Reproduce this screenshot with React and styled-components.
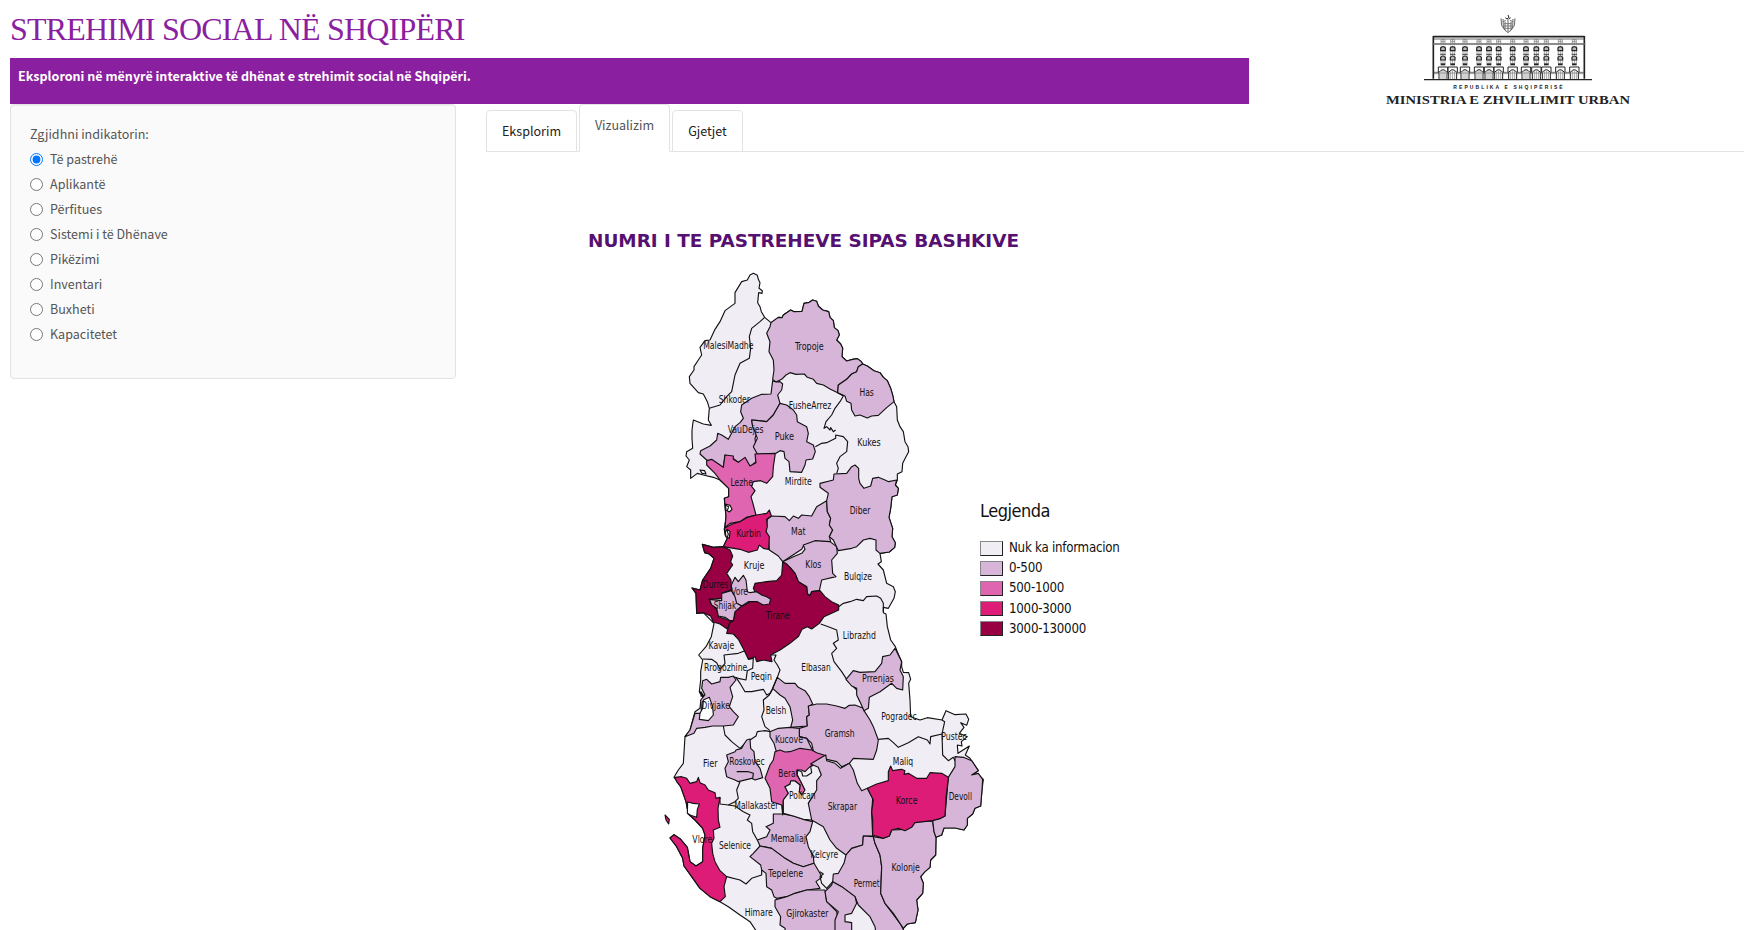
import React, { useState } from "react";
import styled, { createGlobalStyle, css } from "styled-components";

const GlobalStyle = createGlobalStyle`
  * { box-sizing: border-box; }
  body {
    margin: 0;
    background: #fff;
    color: #555;
    font-family: "Noto Sans CJK SC", "Open Sans", sans-serif;
    font-size: 12.55px;
    line-height: 20px;
  }
`;

const Page = styled.div`
  height: 930px;
  overflow: hidden;
  padding-left: 10px;
`;

const Header = styled.header`
  display: flex;
  height: 104px;
`;

const HeaderMain = styled.div`
  width: 1239px;
`;

const Title = styled.h1`
  margin: 0;
  height: 58px;
  padding-top: 10px;
  color: #8a20a0;
  font: 400 32px/38px "Liberation Serif", serif;
  letter-spacing: -0.8px;
  white-space: nowrap;
`;

const Banner = styled.div`
  height: 46px;
  padding: 8px 8px 0;
  background: #8a20a0;
  color: #fff;
  font-weight: 700;
`;

const Logo = styled.svg`
  display: block;
  margin: 5px 0 0 121px;
`;

const Body = styled.div`
  display: flex;
  align-items: flex-start;
`;

const Sidebar = styled.form`
  width: 446px;
  height: 275px;
  padding: 19px 19px 0;
  border: 1px solid #e3e3e3;
  border-radius: 4px;
  background: #fafafa;
  box-shadow: inset 0 1px 1px rgba(0, 0, 0, 0.05);
`;

const Caption = styled.div`
  height: 25px;
`;

const Option = styled.label`
  display: flex;
  align-items: center;
  height: 25px;
  gap: 7px;
  padding-bottom: 5px;

  input {
    width: 13px;
    height: 13px;
    margin: 1px 0 0;
    accent-color: #0075ff;
  }
`;

const Main = styled.main`
  flex: 1;
  margin-left: 30px;
`;

const Tabs = styled.nav`
  display: flex;
  align-items: flex-end;
  gap: 2px;
  height: 48px;
  border-bottom: 1px solid #e3e3e3;
`;

const Tab = styled.button`
  width: ${(p) => p.$width}px;
  height: 42px;
  margin: 0 0 -1px;
  padding: 0 0 1px;
  border: 1px solid #e3e3e3;
  border-radius: 4px 4px 0 0;
  background: #fff;
  color: #222;
  font: inherit;
  ${(p) =>
    p.$active &&
    css`
      height: 48px;
      padding-bottom: 7px;
      border-bottom-color: #fff;
      color: #555;
    `}
`;

const MapPanel = styled.section`
  padding: 76px 0 0 102px;
`;

const MapTitle = styled.h2`
  margin: 0;
  height: 34px;
  color: #551071;
  font: 700 18.4px/25px "DejaVu Sans", sans-serif;
  white-space: nowrap;
`;

const MapRow = styled.div`
  display: flex;
  padding-left: 72px;
`;

const MapSvg = styled.svg`
  display: block;
  overflow: visible;
  text {
    font-family: "DejaVu Sans", sans-serif;
    font-stretch: condensed;
    font-size: 29px;
    text-anchor: middle;
    fill: #111;
  }
`;

const Legend = styled.aside`
  padding-top: 236px;
  color: #111;
  font: 13.2px/20.2px "DejaVu Sans", sans-serif;
  font-stretch: condensed;
  letter-spacing: -0.25px;
`;

const LegendTitle = styled.h3`
  margin: 0 0 15px;
  font-size: 18px;
  line-height: 25px;
  font-weight: 400;
  letter-spacing: -0.5px;
`;

const LegendItem = styled.div`
  display: flex;
  align-items: center;
  gap: 6px;
  white-space: nowrap;
`;

const Swatch = styled.span`
  width: 23px;
  height: 15px;
  border: 1px solid #222;
  border-top-color: #888;
  border-left-color: #888;
  background: ${(p) => p.$color};
`;

const NONE = "#f0edf5";
const LOW = "#d7b5d8";
const MID = "#df65b0";
const HIGH = "#dd1c77";
const TOP = "#980043";

const COUNTRY =
  "250,40 262,46 265,58 270,68 267,85 277,92 276,100 266,98 263,128 270,140 274,155 284,172 303,188 325,172 336,173 340,165 350,158 362,150 372,155 396,154 402,130 418,127 428,120 440,124 445,138 458,150 476,155 480,172 490,182 493,203 504,212 508,225 500,240 512,252 518,265 516,290 530,303 548,298 562,296 574,305 578,312 592,318 612,332 630,338 640,352 652,362 662,385 668,405 672,425 680,440 682,480 690,500 700,515 705,545 714,560 716,575 708,590 698,610 696,635 682,642 682,660 676,675 685,685 682,705 666,710 662,745 657,772 668,805 666,830 676,848 674,862 658,876 630,880 634,905 624,912 640,930 650,970 670,980 676,995 672,1015 655,1045 640,1042 640,1058 648,1062 652,1100 662,1140 676,1160 682,1175 695,1205 695,1220 700,1237 716,1238 722,1258 716,1270 720,1320 722,1370 750,1380 772,1373 816,1380 828,1352 855,1364 888,1362 896,1378 890,1396 872,1388 882,1402 868,1420 892,1430 874,1445 876,1458 862,1455 864,1480 898,1458 886,1485 900,1495 910,1510 925,1532 905,1548 926,1545 940,1558 936,1590 932,1638 915,1645 908,1662 892,1675 892,1695 882,1710 855,1704 822,1704 815,1725 798,1732 797,1785 782,1800 780,1822 765,1835 752,1850 760,1870 758,1900 740,1920 744,1950 736,1988 712,1992 700,2005 700,2050 270,2050 260,2015 240,1985 210,1965 175,1940 150,1925 120,1910 90,1885 65,1850 42,1818 38,1795 20,1760 0,1734 12,1724 32,1738 52,1762 60,1805 78,1818 98,1805 98,1765 105,1725 98,1705 75,1680 55,1662 48,1625 32,1580 18,1560 12,1552 25,1530 40,1510 45,1430 60,1410 75,1355 90,1345 92,1325 100,1310 88,1295 92,1260 92,1235 98,1200 86,1185 108,1160 124,1130 132,1090 100,1058 80,1060 78,1000 66,984 90,990 98,960 122,925 132,895 118,882 104,878 97,853 130,862 160,860 172,835 163,810 168,770 163,715 176,710 176,685 150,660 130,652 100,645 82,640 62,655 62,630 50,620 58,600 48,588 50,575 68,565 66,535 66,510 70,480 100,492 124,496 115,480 118,445 112,425 100,402 85,398 60,370 58,350 72,330 72,320 85,300 95,285 90,262 105,242 120,240 135,208 150,185 165,152 195,130 195,98 215,65 232,60 240,45";

// Each sheet holds shapes that share one local origin on the map.
const SHEETS = [
  {
    at: [0, 0],
    areas: [
      [LOW, "303,188 325,172 336,173 340,165 350,158 362,150 372,155 396,154 402,130 418,127 428,120 440,124 445,138 458,150 476,155 480,172 490,182 493,203 504,212 508,225 500,240 512,252 518,265 516,290 530,303 548,298 562,296 574,305 578,312 565,320 560,335 545,342 530,358 505,375 503,398 480,387 460,375 440,370 430,358 412,352 403,342 378,343 360,338 348,345 335,358 318,366 308,358 312,330 310,300 297,275 300,245 290,220 300,200"],
      [LOW, "578,312 592,318 612,332 630,338 640,352 652,362 662,385 668,405 672,425 650,443 625,466 605,468 592,474 570,465 555,468 545,450 543,430 530,424 525,408 503,398 505,375 530,358 545,342 560,335 565,320"],
      [LOW, "308,362 318,366 330,365 338,372 335,390 323,405 330,430 320,447 310,465 290,485 265,482 245,480 248,500 262,515 255,535 258,560 262,582 258,605 240,620 225,595 205,607 190,595 165,585 160,623 110,600 90,582 92,572 120,558 140,540 143,520 155,525 175,538 195,500 210,488 220,475 212,455 215,435 245,415 275,403 303,402"],
      [LOW, "330,430 350,435 370,450 380,465 382,485 410,500 415,520 410,545 430,555 436,575 428,597 408,600 405,615 395,637 360,635 357,605 345,595 342,575 330,572 318,580 262,582 250,560 262,535 255,515 248,500 245,480 265,482 290,485 310,465"],
    ],
    lines: [
      "284,172 270,185 245,205 238,230 242,265 238,295 210,310 195,345 190,370 185,395 170,410 150,435 118,445",
      "503,398 520,408 510,425 495,445 485,465 468,485 462,505 470,500 480,510 482,503 490,515 497,510",
      "436,560 455,550 470,548 497,535 497,525 520,530 533,545 530,575 510,590 500,610 505,625 500,640",
    ],
  },
  {
    at: [0, 510],
    areas: [
      [LOW, "304,258 345,260 358,272 370,258 385,265 395,255 425,258 440,230 470,212 472,245 482,265 478,285 488,300 478,320 482,335 435,335 400,348 395,358 338,395 325,378 298,360 296,330 288,305 292,268"],
      [LOW, "338,395 370,380 395,370 405,358 400,345 435,332 480,335 500,350 502,370 485,390 488,430 498,440 455,450 448,482 425,485 420,497 412,490 410,470 385,455 375,430 360,412"],
      [LOW, "450,160 490,150 492,132 530,130 545,110 555,105 566,115 566,145 570,160 582,175 602,168 608,145 625,142 645,150 656,155 680,150 676,165 685,175 682,195 666,200 662,235 657,262 668,295 666,320 676,338 674,352 658,366 630,370 618,360 618,330 600,325 580,330 560,350 545,355 505,362 490,330 478,320 488,300 478,285 482,265 472,245 470,212 475,190 450,172"],
      [MID, "110,92 125,88 160,112 165,75 190,78 190,88 205,97 225,82 240,108 258,98 255,72 316,70 310,110 308,140 290,160 272,152 250,155 245,170 255,182 243,200 250,225 258,255 230,262 210,275 180,280 165,292 168,260 163,205 176,200 176,175 150,150 135,130 110,105"],
      [HIGH, "163,295 185,283 210,275 232,262 260,255 290,250 298,240 304,258 290,268 292,290 288,305 298,320 296,358 280,355 268,345 262,360 235,367 210,358 160,350 172,325 165,315"],
      [TOP, "97,343 130,352 160,350 180,360 188,378 182,395 188,405 170,430 183,450 184,480 155,490 155,505 118,508 125,525 140,535 145,560 185,573 178,585 172,597 150,582 130,576 122,558 100,548 80,550 78,490 66,474 90,480 98,450 122,415 132,385 118,372 104,368"],
      [TOP, "338,397 348,400 360,412 375,430 385,455 410,470 412,492 420,497 425,485 450,482 465,500 485,515 506,525 506,540 485,550 462,560 448,580 425,597 412,590 396,598 385,620 360,640 330,660 302,675 306,695 280,690 260,695 255,680 235,688 222,660 205,628 190,612 170,610 178,580 190,572 195,545 215,528 235,520 255,485 250,475 255,460 290,455 320,452 335,435"],
      [LOW, "184,465 195,442 205,455 220,436 228,450 232,485 240,488 260,485 275,495 290,500 302,508 298,522 280,525 262,515 235,515 215,528 200,520 185,490"],
      [LOW, "118,508 155,512 155,490 184,482 195,500 200,520 215,528 195,545 190,572 180,572 165,562 145,558 140,535 125,525"],
      ["#fff", "166,222 180,226 186,238 178,246 168,240"],
      ["#fff", "172,298 180,305 178,325 168,320 166,305"],
      [NONE, "90,120 104,122 108,132 96,130"],
    ],
    lines: [
      "506,530 520,520 540,515 560,508 580,512 590,500 620,498 632,505 640,520 640,545",
      "167,226 176,230 172,242",
      "170,300 175,312 172,322",
    ],
  },
  {
    at: [0, 1020],
    areas: [
      [LOW, "98,242 110,238 125,252 150,245 152,232 175,232 190,228 198,240 180,262 188,290 178,320 190,335 205,350 190,375 160,378 128,378 105,382 80,385 72,400 45,410 60,390 75,340 95,340 92,300 105,285 95,265"],
      ["#fff", "100,300 118,292 128,320 130,345 115,362 88,358 90,340 98,325"],
      [LOW, "322,232 345,250 375,250 385,262 405,272 418,290 428,312 415,320 418,345 410,350 412,378 362,382 368,360 360,320 345,295 330,285 308,265"],
      [LOW, "415,318 440,312 470,312 500,318 525,325 538,316 555,315 580,325 582,332 600,360 610,380 625,420 620,450 610,478 550,475 538,490 515,500 500,485 470,478 445,485 430,452 425,430 410,415 388,410 388,385 412,378 410,350 418,345"],
      [LOW, "300,395 325,385 360,382 388,385 388,410 410,415 428,452 405,460 375,452 350,460 320,458 312,430 300,410"],
    ],
    lines: [
      "452,72 475,80 500,90 505,120 490,130 500,145 485,160 492,185 515,215 530,238 560,270 568,300 580,318",
      "302,165 318,165 312,180 322,195 330,210 322,232 308,265 300,280 290,285 280,268 245,275 225,275 210,250 198,232",
      "98,177 125,178 140,188 150,208 165,190 162,165 205,160 225,152",
      "235,178 250,175 248,205 232,212 228,240 205,235 190,230",
      "308,268 298,285 280,300 282,330 275,350 285,380 300,392",
      "160,378 165,405 185,425 210,445 225,430 240,420 258,408 262,395 285,392 300,395",
    ],
  },
  {
    at: [510, 1140],
    areas: [
      [LOW, "18,118 40,92 60,97 105,95 125,70 128,50 150,45 165,25 175,45 185,65 180,90 190,110 188,150 170,145 155,130 120,155 88,172 85,205 72,212 62,190 50,165 50,145 35,138"],
    ],
    lines: [
      "115,298 145,295 160,308 175,322 205,308 235,290 262,300 270,312 272,290 306,282",
      "306,240 314,245 306,282 308,345 325,362 340,352 350,372",
    ],
  },
  {
    at: [-30, 1440],
    areas: [
      [LOW, "200,45 225,35 228,30 245,25 252,12 260,0 270,-3 272,25 282,35 285,65 300,85 308,113 285,120 275,115 235,125 225,120 200,110 195,85 205,65"],
      [LOW, "340,222 370,222 400,228 430,238 458,245 450,275 438,290 445,320 460,350 462,370 430,380 400,370 375,355 355,340 335,325 300,318 292,300 320,290 330,270 318,260 340,250"],
      [LOW, "300,318 335,325 355,340 375,355 400,370 430,380 462,370 480,400 485,412 468,425 480,445 440,450 405,460 380,470 350,475 342,470 335,450 320,440 318,400 305,390 302,375 270,350 280,340"],
      [LOW, "345,480 380,470 405,460 440,450 495,450 500,485 530,515 540,570 540,620 380,620 375,565 360,555 362,530 345,500"],
      [MID, "345,35 360,30 375,36 390,35 420,25 455,30 470,38 498,47 475,65 450,80 435,95 425,90 412,90 412,105 425,130 435,150 425,165 418,155 420,135 405,123 392,123 390,133 375,140 385,160 370,180 368,225 365,195 335,185 330,145 315,115 330,75 340,60"],
      [NONE, "370,220 370,180 385,160 375,140 390,133 392,123 405,123 420,135 418,155 425,165 435,150 425,130 412,105 412,90 425,95 428,108 440,108 455,98 452,80 465,72 475,80 485,105 472,122 475,150 455,175 445,190 458,215 455,240 430,238 400,228"],
      [HIGH, "45,112 65,110 80,115 90,130 110,125 115,112 120,128 135,135 145,150 165,158 168,175 180,172 174,205 175,240 180,262 160,270 162,295 155,310 158,340 165,365 180,392 200,410 192,440 196,470 180,485 150,470 120,445 95,410 72,378 68,355 50,320 30,294 42,284 62,298 82,322 90,365 108,378 128,365 128,325 135,285 128,265 105,240 85,222 78,185 62,140 50,125"],
      ["#fff", "83,186 100,190 118,192 112,208 110,232 92,226 82,220"],
      [HIGH, "15,225 28,238 26,252 18,240"],
    ],
    lines: [
      "180,172 180,192 205,195 225,185 235,175 230,150 240,125",
      "225,198 250,215 270,225 262,240 275,250 278,275 292,300",
      "205,195 225,198",
      "230,95 265,95 280,100 278,116",
      "200,410 240,420 258,432 275,415 305,405 305,390",
    ],
  },
  {
    at: [450, 1440],
    areas: [
      [LOW, "17,45 20,62 45,70 62,85 88,70 100,90 112,130 125,152 142,145 158,175 155,220 158,288 130,288 128,315 95,325 78,345 50,325 30,300 10,260 -25,240 -35,190 -10,150 -10,122 4,105 -5,82 -28,72 -5,58"],
      [LOW, "130,288 160,290 165,310 180,345 185,380 182,460 195,490 240,550 250,568 250,600 170,600 165,560 150,530 115,495 105,470 65,440 38,425 40,402 55,400 72,370 78,345 95,325 128,315"],
      [LOW, "160,290 190,295 208,288 215,270 255,268 275,258 285,245 338,243 342,275 348,292 347,345 332,360 330,382 315,395 302,410 310,430 308,460 290,480 294,510 286,548 262,552 250,565 240,550 220,520 195,490 182,460 185,380 180,345 165,310"],
      [LOW, "405,50 430,52 455,62 475,92 455,105 475,100 488,118 486,150 482,198 465,205 458,222 442,235 442,255 432,270 405,264 372,264 365,285 348,292 342,275 338,240 362,235 375,228 385,112 405,80"],
      [HIGH, "142,145 170,132 205,122 205,95 212,78 218,92 245,88 255,92 252,103 265,100 290,115 320,115 330,98 365,100 385,112 378,175 375,228 362,235 338,242 285,248 275,262 255,272 235,265 215,270 208,288 190,295 158,285 158,240 155,215 160,180"],
      [LOW, "38,425 65,440 105,470 110,490 95,520 75,525 75,545 95,548 95,600 45,600 45,540 55,515 20,485 15,455 35,435"],
    ],
    lines: ["0,395 10,402 0,410 5,430 20,445 38,425"],
  },
];

// Name, centre x, baseline y, drawn width.
const LABELS = [
  ["MalesiMadhe", 175, 268, 151], ["Tropoje", 418, 271, 86], ["Has", 590, 407, 43],
  ["Shkoder", 193, 428, 94], ["FusheArrez", 420, 446, 128], ["VauDejes", 227, 518, 108],
  ["Puke", 343, 541, 58], ["Kukes", 597, 557, 70], ["Lezhe", 215, 678, 67],
  ["Mirdite", 385, 676, 81], ["Diber", 570, 761, 62], ["Kurbin", 236, 831, 74],
  ["Mat", 385, 824, 44], ["Kruje", 252, 927, 62], ["Klos", 430, 924, 48],
  ["Bulqize", 564, 960, 84], ["Durres", 136, 985, 77], ["Vore", 209, 1006, 50],
  ["Shijak", 165, 1046, 68], ["Tirane", 323, 1078, 72], ["Kavaje", 154, 1168, 77],
  ["Librazhd", 568, 1138, 99], ["Rrogozhine", 167, 1234, 130], ["Peqin", 274, 1259, 64],
  ["Elbasan", 438, 1234, 88], ["Prrenjas", 624, 1265, 96], ["Divjake", 137, 1348, 86],
  ["Belsh", 318, 1362, 62], ["Pogradec", 687, 1381, 106], ["Gramsh", 509, 1431, 90],
  ["Kucove", 357, 1449, 84], ["Pustec", 852, 1439, 76], ["Maliq", 699, 1514, 61],
  ["Fier", 121, 1520, 44], ["Roskovec", 231, 1514, 106], ["Berat", 355, 1551, 60],
  ["Polican", 397, 1617, 80], ["Skrapar", 517, 1650, 88], ["Korce", 710, 1633, 65],
  ["Devoll", 871, 1621, 70], ["Mallakaster", 259, 1647, 132], ["Vlore", 97, 1750, 60],
  ["Selenice", 195, 1766, 96], ["Memaliaj", 355, 1747, 106], ["Kelcyre", 463, 1794, 83],
  ["Kolonje", 707, 1833, 85], ["Tepelene", 347, 1852, 104], ["Permet", 590, 1882, 78],
  ["Himare", 266, 1968, 84], ["Gjirokaster", 412, 1972, 126],
];

function AlbaniaMap() {
  return (
    <MapSvg width="320" height="668" viewBox="-30 6 960 2004">
      <g stroke="#111" strokeWidth="3.4" strokeLinejoin="round" fill="none">
        <polygon points={COUNTRY} fill={NONE} />
        {SHEETS.map((s, i) => (
          <g key={i} transform={`translate(${s.at[0]} ${s.at[1]})`}>
            {s.areas.map(([fill, points], n) => (
              <polygon key={n} points={points} fill={fill} />
            ))}
            {s.lines.map((points, n) => (
              <polyline key={n} points={points} />
            ))}
          </g>
        ))}
        <path d="M90 1295l8 12M92 1305l10 4" strokeWidth="8" />
      </g>
      {LABELS.map(([name, x, y, w]) => (
        <text key={name} x={x} y={y} textLength={w} lengthAdjust="spacingAndGlyphs">
          {name}
        </text>
      ))}
    </MapSvg>
  );
}

const COLUMNS = [219, 248, 285, 327, 357, 386, 428, 468, 499, 529, 571, 613];

function MinistryLogo() {
  return (
    <Logo width="280" height="99" viewBox="0 0 840 297" overflow="visible">
      <g fill="none" stroke="#222" strokeWidth="3">
        <g stroke="#666" strokeWidth="3">
          <path d="M414 30l3 7-6 5M411 42l-5-4M417 42l5-4" stroke="#222" />
          <path d="M414 42v40M393 40l2 22 10 14M435 40l-2 22-10 14M399 42l1 24 8 12M429 42l-1 24-8 12M405 50v20M423 50v20" />
          <path d="M408 46l-9 4M420 46l9 4M403 56h22M401 63h26M405 70h18M406 77l8 6 8-6" strokeWidth="2.5" />
        </g>
        <path d="M190 95H643M190 93v128M643 93v128" strokeWidth="5" />
        <path d="M188 117H646" strokeWidth="5" stroke="#666" />
        <path d="M192 102H641M192 202H641" strokeWidth="2" />
        <path d="M192 206H641" stroke="#666" strokeWidth="2" />
        <path d="M162 224H666" strokeWidth="4" />
        {COLUMNS.map((x) => (
          <g key={x}>
            <path d={`M${x - 6} 117v-13h12v13M${x} 104v13M${x - 6} 110h12`} stroke="#777" strokeWidth="2" />
            <path d={`M${x - 6} 122v54M${x} 122v54M${x + 6} 122v54`} stroke="#999" strokeWidth="2.5" />
            <path d={`M${x - 7} 137v-8q7-8 14 0v8zM${x - 7} 165v-8q7-8 14 0v8z`} fill="#bbb" strokeWidth="3.5" />
            <path d={`M${x - 8} 148h16`} strokeWidth="2.5" />
            <path d={`M${x - 7} 178h14`} strokeWidth="6" />
            <path d={`M${x - 14} 202v-16h28v16`} />
            <path d={`M${x - 12} 222v-20q12-16 24 0v20`} fill="#fff" />
            <path d={`M${x - 6} 222v-24M${x} 222v-26M${x + 6} 222v-24M${x - 11} 204h22`} stroke="#777" strokeWidth="2" />
          </g>
        ))}
      </g>
      <text x="250" y="252" textLength="328" fontFamily="Liberation Sans, sans-serif" fontWeight="700" fontSize="15" fill="#222">
        REPUBLIKA E SHQIPËRISË
      </text>
      <text x="48" y="297" textLength="732" lengthAdjust="spacingAndGlyphs" fontFamily="Liberation Serif, serif" fontWeight="700" fontSize="37" fill="#222">
        MINISTRIA E ZHVILLIMIT URBAN
      </text>
    </Logo>
  );
}

const INDICATORS = ["Të pastrehë", "Aplikantë", "Përfitues", "Sistemi i të Dhënave", "Pikëzimi", "Inventari", "Buxheti", "Kapacitetet"];
const TABS = [["Eksplorim", 91], ["Vizualizim", 91], ["Gjetjet", 71]];
const LEGEND = [["Nuk ka informacion", NONE], ["0-500", LOW], ["500-1000", MID], ["1000-3000", HIGH], ["3000-130000", TOP]];

export default function App() {
  const [indicator, setIndicator] = useState(INDICATORS[0]);
  const [tab, setTab] = useState("Vizualizim");
  return (
    <Page>
      <GlobalStyle />
      <Header>
        <HeaderMain>
          <Title>STREHIMI SOCIAL NË SHQIPËRI</Title>
          <Banner>Eksploroni në mënyrë interaktive të dhënat e strehimit social në Shqipëri.</Banner>
        </HeaderMain>
        <MinistryLogo />
      </Header>
      <Body>
        <Sidebar>
          <Caption>Zgjidhni indikatorin:</Caption>
          {INDICATORS.map((name) => (
            <Option key={name}>
              <input type="radio" name="indicator" checked={indicator === name} onChange={() => setIndicator(name)} />
              {name}
            </Option>
          ))}
        </Sidebar>
        <Main>
          <Tabs>
            {TABS.map(([name, width]) => (
              <Tab key={name} $width={width} $active={tab === name} onClick={() => setTab(name)}>
                {name}
              </Tab>
            ))}
          </Tabs>
          <MapPanel>
            <MapTitle>NUMRI I TE PASTREHEVE SIPAS BASHKIVE</MapTitle>
            <MapRow>
              <AlbaniaMap />
              <Legend>
                <LegendTitle>Legjenda</LegendTitle>
                {LEGEND.map(([label, color]) => (
                  <LegendItem key={label}>
                    <Swatch $color={color} />
                    {label}
                  </LegendItem>
                ))}
              </Legend>
            </MapRow>
          </MapPanel>
        </Main>
      </Body>
    </Page>
  );
}
